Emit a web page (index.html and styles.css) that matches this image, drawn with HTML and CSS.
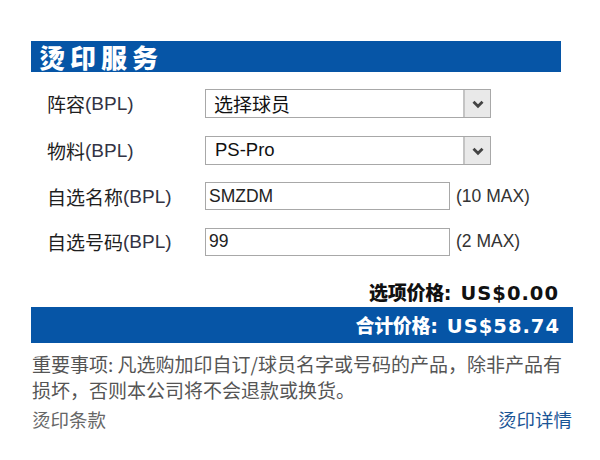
FILE: index.html
```html
<!DOCTYPE html>
<html lang="zh-CN">
<head>
<meta charset="utf-8">
<title>烫印服务</title>
<link rel="stylesheet" href="styles.css">
</head>
<body>
<div class="panel">
  <div class="title-bar"><span class="title">烫印服务</span></div>

  <div class="form">
    <div class="label">阵容<span class="lat">(BPL)</span></div>
    <div class="field">
      <div class="select">
        <span class="select-text">选择球员</span>
        <span class="select-btn"><svg width="12" height="9" viewBox="0 0 12 9"><path d="M1.5 1.8 L6 6.3 L10.5 1.8" fill="none" stroke="#444444" stroke-width="2.8"/></svg></span>
      </div>
    </div>

    <div class="label">物料<span class="lat">(BPL)</span></div>
    <div class="field">
      <div class="select">
        <span class="select-text lat-text">PS-Pro</span>
        <span class="select-btn"><svg width="12" height="9" viewBox="0 0 12 9"><path d="M1.5 1.8 L6 6.3 L10.5 1.8" fill="none" stroke="#444444" stroke-width="2.8"/></svg></span>
      </div>
    </div>

    <div class="label">自选名称<span class="lat">(BPL)</span></div>
    <div class="field">
      <div class="input">SMZDM</div>
      <span class="max">(10 MAX)</span>
    </div>

    <div class="label">自选号码<span class="lat">(BPL)</span></div>
    <div class="field">
      <div class="input">99</div>
      <span class="max">(2 MAX)</span>
    </div>
  </div>

  <div class="option-price"><span class="cjk">选项价格</span><span class="num">: US$0.00</span></div>
  <div class="total-bar"><span class="total"><span class="cjk">合计价格</span><span class="num">: US$58.74</span></span></div>

  <p class="notice">重要事项: 凡选购加印自订/球员名字或号码的产品，除非产品有<br>损坏，否则本公司将不会退款或换货。</p>

  <div class="links">
    <span class="terms">烫印条款</span>
    <span class="details">烫印详情</span>
  </div>
</div>
</body>
</html>
```

FILE: styles.css
```css
html, body {
  margin: 0;
  padding: 0;
  background: #ffffff;
}

body {
  font-family: "Liberation Sans", "Noto Sans CJK SC", sans-serif;
  color: #222222;
}

.panel {
  padding: 41px 27px 0 31px;
}

.title-bar {
  width: 530px;
  height: 31px;
  background: #0655a6;
  display: flex;
  align-items: center;
  padding-left: 8px;
  box-sizing: border-box;
}

.title {
  color: #ffffff;
  font-family: "Noto Sans CJK SC", sans-serif;
  font-weight: 900;
  font-size: 26px;
  letter-spacing: 5px;
  line-height: 31px;
}

.form {
  display: grid;
  grid-template-columns: 174px 1fr;
  grid-template-rows: 29px 29px 28px 28px;
  row-gap: 17.5px;
  margin-top: 17px;
}

.label {
  padding-left: 16px;
  display: flex;
  align-items: center;
  font-family: "Noto Sans CJK SC", sans-serif;
  font-size: 19px;
  color: #1e1e1e;
  line-height: 1;
}

.lat {
  font-family: "Liberation Sans", sans-serif;
  font-size: 19px;
  color: #333344;
}

.field {
  display: flex;
  align-items: center;
}

.select {
  width: 286px;
  height: 29px;
  box-sizing: border-box;
  border: 1px solid #a8a8a8;
  display: flex;
  align-items: center;
  justify-content: space-between;
}

.select-text {
  padding-left: 8px;
  font-family: "Noto Sans CJK SC", sans-serif;
  font-size: 19px;
  color: #111111;
}

.select-text.lat-text {
  font-family: "Liberation Sans", sans-serif;
  font-size: 18.5px;
  padding-left: 9px;
}

.select-btn {
  width: 27px;
  height: 27px;
  box-sizing: border-box;
  border-left: 2px solid #c4c4c4;
  background: #e9e9e9;
  display: flex;
  align-items: center;
  justify-content: center;
  padding-top: 2px;
}

.input {
  width: 245px;
  height: 28px;
  box-sizing: border-box;
  border: 1px solid #a8a8a8;
  padding-left: 3px;
  display: flex;
  align-items: center;
  font-family: "Liberation Sans", sans-serif;
  font-size: 17.5px;
  color: #222222;
}

.max {
  margin-left: 6px;
  font-family: "Liberation Sans", sans-serif;
  font-size: 17.5px;
  color: #333333;
}

.cjk {
  font-family: "Noto Sans CJK SC", sans-serif;
  font-size: 19px;
  font-weight: 900;
  letter-spacing: -0.3px;
}

.num {
  font-family: "DejaVu Sans", sans-serif;
  font-size: 19.5px;
  font-weight: 700;
  letter-spacing: 1px;
}

.option-price {
  margin-top: 23px;
  line-height: 26px;
  height: 26px;
  text-align: right;
  padding-right: 13px;
  color: #111111;
  width: 541px;
  box-sizing: border-box;
}

.total-bar {
  margin-top: 2px;
  width: 542px;
  height: 36px;
  background: #0655a6;
  display: flex;
  align-items: center;
  justify-content: flex-end;
  padding-right: 13px;
  box-sizing: border-box;
}

.total {
  color: #ffffff;
}

.notice {
  margin: 8px 0 0 1px;
  font-family: "Noto Sans CJK SC", sans-serif;
  font-size: 19px;
  line-height: 26px;
  color: #555555;
}

.links {
  margin-top: 3px;
  width: 541px;
  display: flex;
  justify-content: space-between;
  font-family: "Noto Sans CJK SC", sans-serif;
  font-size: 18.5px;
  line-height: 26px;
  padding-left: 1px;
  box-sizing: border-box;
}

.terms {
  color: #666666;
}

.details {
  color: #1a5596;
}
```
